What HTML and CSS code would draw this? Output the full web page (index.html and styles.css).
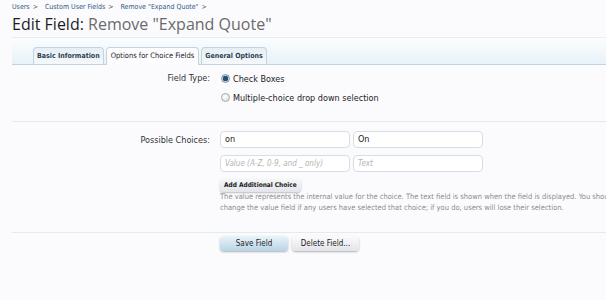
FILE: index.html
```html
<!DOCTYPE html>
<html>
<head>
<meta charset="utf-8">
<link rel="stylesheet" href="styles.css">
</head>
<body>
<div class="page">
  <div class="crumbs">
    <a class="crumb">Users</a><span class="sep">&gt;</span>
    <a class="crumb">Custom User Fields</a><span class="sep">&gt;</span>
    <a class="crumb">Remove "Expand Quote"</a><span class="sep">&gt;</span>
  </div>
  <h1 class="title"><span class="title-lead">Edit Field:</span> Remove "Expand Quote"</h1>

  <div class="tabbar">
    <ul class="tabs">
      <li class="tab">Basic Information</li>
      <li class="tab active">Options for Choice Fields</li>
      <li class="tab">General Options</li>
    </ul>
  </div>

  <div class="row row-type">
    <div class="label">Field Type:</div>
    <div class="value">
      <div class="radio-line"><span class="radio checked"></span>Check Boxes</div>
      <div class="radio-line"><span class="radio"></span>Multiple-choice drop down selection</div>
    </div>
  </div>

  <div class="row row-choices">
    <div class="label label-choices">Possible Choices:</div>
    <div class="value">
      <div class="pair">
        <div class="input">on</div>
        <div class="input">On</div>
      </div>
      <div class="pair">
        <div class="input placeholder">Value (A-Z, 0-9, and _ only)</div>
        <div class="input placeholder">Text</div>
      </div>
      <div class="btn btn-small">Add Additional Choice</div>
      <p class="explain">The value represents the internal value for the choice. The text field is shown when the field is displayed. You should not<br>change the value field if any users have selected that choice; if you do, users will lose their selection.</p>
    </div>
  </div>

  <div class="submit-row">
    <div class="btn btn-primary">Save Field</div>
    <div class="btn btn-secondary">Delete Field...</div>
  </div>
</div>
</body>
</html>
```

FILE: styles.css
```css
html, body {
  margin: 0;
  padding: 0;
  background: #fbfbfe;
  overflow: hidden;
}
body {
  width: 606px;
  height: 300px;
  font-family: "DejaVu Sans Condensed", "DejaVu Sans", sans-serif;
  font-stretch: condensed;
  font-size: 9px;
  color: #222;
}
.page {
  padding-left: 12px;
}
.crumbs {
  height: 11px;
  padding-top: 2px;
  font-size: 7px;
  line-height: 11px;
  color: #2f5a80;
  white-space: nowrap;
}
.crumb {
  color: #2f5a80;
}
.sep {
  margin: 0 5px 0 3px;
  color: #555;
}
.title {
  margin: 0;
  height: 24px;
  font-family: "Open Sans", sans-serif;
  font-stretch: normal;
  font-size: 16px;
  font-weight: 400;
  line-height: 22px;
  color: #6a6a6a;
  border-bottom: 1px solid #e6eef4;
  white-space: nowrap;
}
.title-lead {
  color: #1d1d1d;
}
.tabbar {
  height: 26px;
  background: linear-gradient(#fbfdfe, #e8f2f8);
  border-bottom: 1px solid #c3d3df;
  display: flex;
  align-items: flex-end;
}
.tabs {
  list-style: none;
  margin: 0 0 -1px 21px;
  padding: 0;
  display: flex;
  gap: 2px;
}
.tab {
  height: 16px;
  line-height: 16px;
  padding: 0 3px;
  font-size: 7px;
  font-weight: bold;
  color: #2b3f52;
  background: linear-gradient(#e6eff6, #f3f8fb);
  border: 1px solid #c3d3df;
  border-bottom: none;
  border-radius: 4px 4px 0 0;
}
.tab.active {
  font-weight: normal;
  font-size: 7.5px;
  color: #222;
  background: #fdfdff;
  height: 17px;
  padding: 0 4px;
}
.row {
  display: flex;
  border-bottom: 1px solid #e3ebf1;
}
.label {
  flex: 0 0 198px;
  margin-right: 10px;
  display: flex;
  justify-content: flex-end;
  align-items: flex-start;
  color: #333;
  font-size: 9px;
  white-space: nowrap;
}
.row-type {
  padding: 8px 0 10px;
}
.row-type .label {
  line-height: 11px;
}
.radio-line {
  display: flex;
  align-items: center;
  height: 11px;
  margin-bottom: 8px;
  padding-left: 1px;
  white-space: nowrap;
  color: #222;
}
.radio {
  width: 9px;
  height: 9px;
  border-radius: 50%;
  border: 1px solid #a8a8a8;
  background: radial-gradient(circle at 40% 35%, #ffffff, #d8d8d8);
  margin-right: 3px;
  box-sizing: border-box;
}
.radio.checked {
  border-color: #7f96aa;
  background: radial-gradient(circle, #2d4f6e 0 2.5px, #bcd3e6 3px);
}
.row-choices {
  padding: 9px 0 19px;
}
.label-choices {
  padding-top: 3px;
  line-height: 12px;
}
.value {
  flex: 1 1 auto;
  min-width: 0;
}
.pair {
  display: flex;
  gap: 3px;
  margin-bottom: 7px;
}
.input {
  width: 130px;
  height: 17px;
  box-sizing: border-box;
  border: 1px solid #d6dee5;
  border-radius: 4px;
  background: #fff;
  padding: 0 4px;
  line-height: 15px;
  font-size: 9px;
  color: #222;
}
.input.placeholder {
  color: #b4b4b4;
  font-style: italic;
  font-size: 8px;
}
.btn {
  display: inline-block;
  box-sizing: border-box;
  border-radius: 4px;
  text-align: center;
  white-space: nowrap;
}
.btn-small {
  height: 13px;
  line-height: 13px;
  padding: 0 4px;
  font-size: 6.5px;
  font-weight: bold;
  color: #222;
  background: linear-gradient(#f6f7f9, #e2e5ea);
  box-shadow: 0 1px 2px rgba(0,0,0,0.25);
}
.explain {
  margin: -1px 0 0;
  font-size: 7.5px;
  line-height: 11px;
  color: #8c8c8c;
  white-space: nowrap;
}
.submit-row {
  display: flex;
  gap: 4px;
  padding: 3px 0 0 208px;
}
.btn-primary, .btn-secondary {
  height: 15px;
  line-height: 15px;
  font-size: 8px;
  color: #222;
  box-shadow: 0 1px 2px rgba(0,0,0,0.3);
}
.btn-primary {
  width: 68px;
  background: linear-gradient(#eaf3f9, #b8d4e6);
}
.btn-secondary {
  width: 67px;
  background: linear-gradient(#fbfbfd, #e2e4ea);
}
```
